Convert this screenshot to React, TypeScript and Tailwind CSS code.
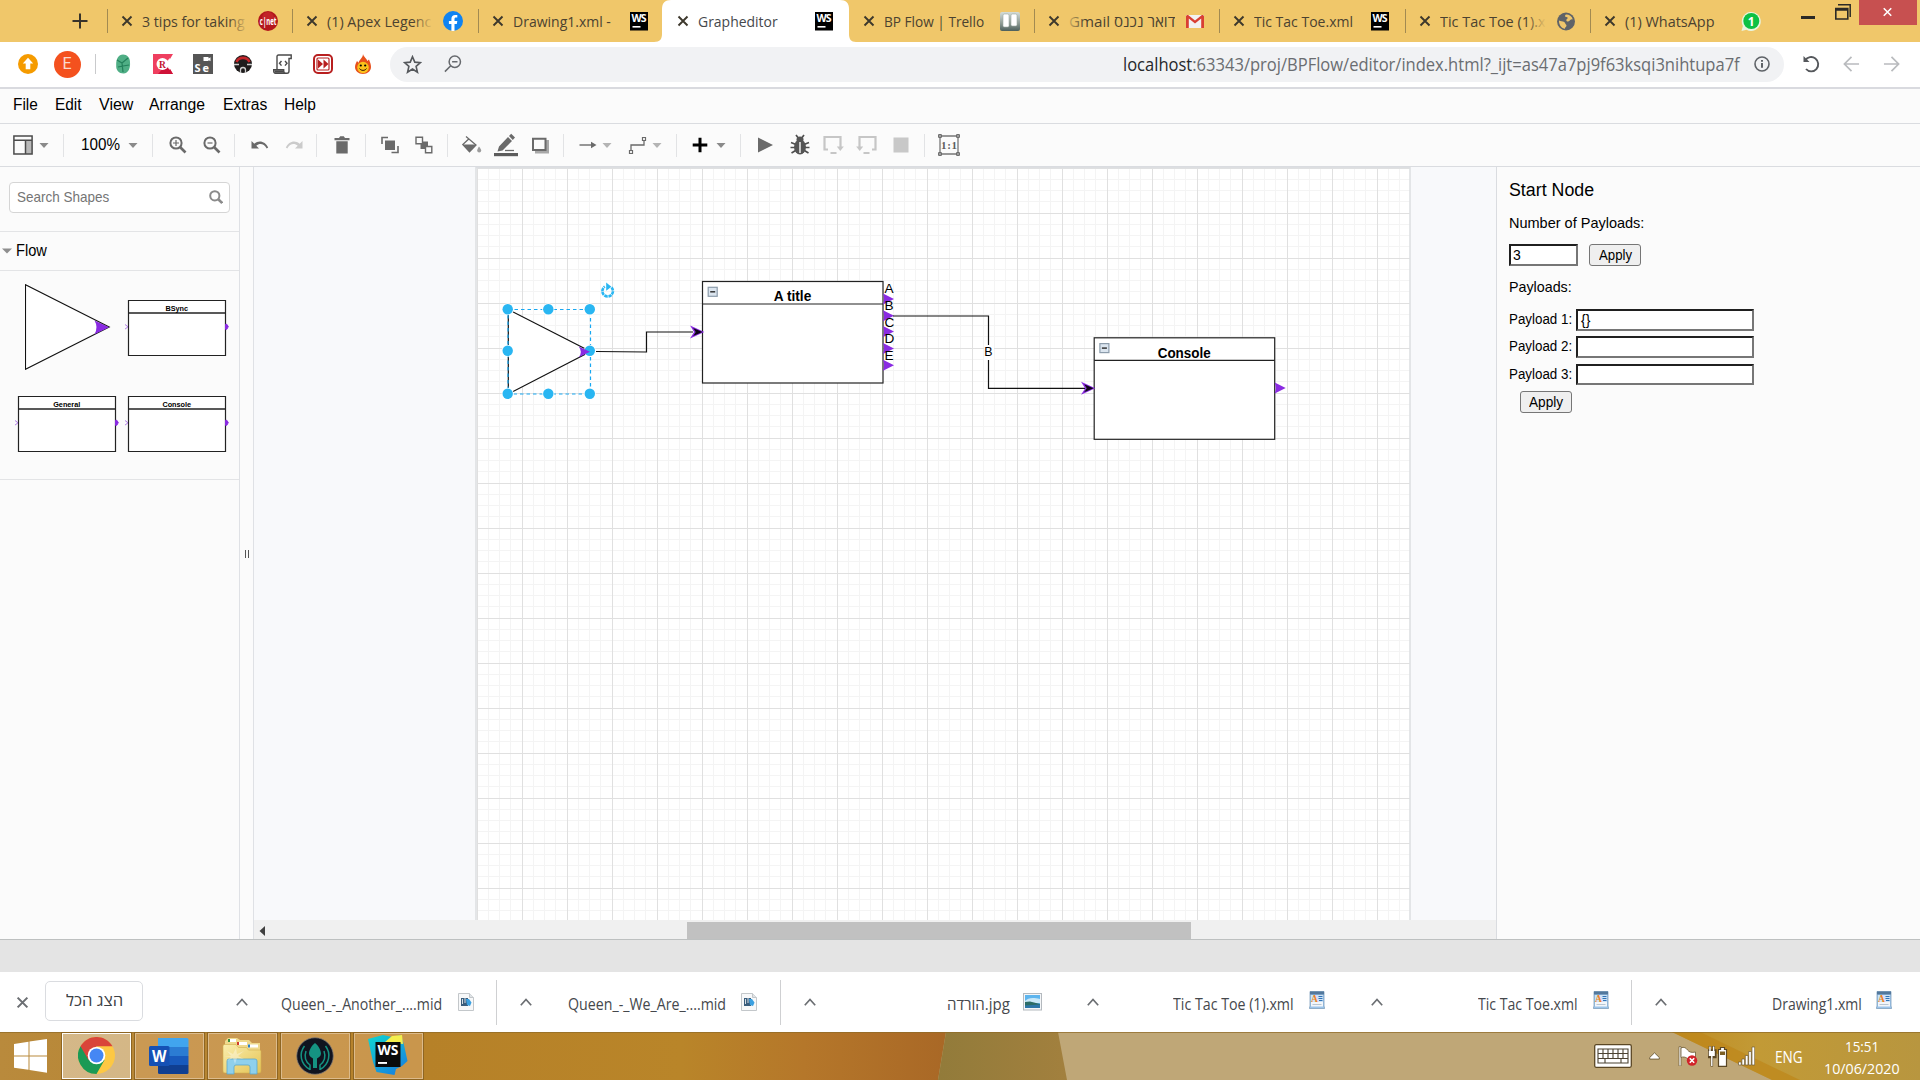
import React, { useLayoutEffect, useRef, useState } from "react";

const UI = "font-['Open_Sans','Noto_Sans','DejaVu_Sans',sans-serif]";
const ARIAL = "font-['Liberation_Sans',Arial,sans-serif]";

/* One line of text squeezed or stretched to a known width. */
function Fit({ w, className = "", rtl = false, children }: { w: number; className?: string; rtl?: boolean; children: React.ReactNode }) {
  const ref = useRef<HTMLSpanElement>(null);
  const [scale, setScale] = useState(1);
  useLayoutEffect(() => {
    const natural = ref.current?.offsetWidth ?? 0;
    if (natural > 0) setScale(w / natural);
  }, [w]);
  return (
    <span className={"block shrink-0 text-left " + className} style={{ width: w }}>
      <span ref={ref} dir={rtl ? "rtl" : "ltr"} className="inline-block origin-left whitespace-nowrap" style={{ transform: `scaleX(${scale})` }}>
        {children}
      </span>
    </span>
  );
}

/* ---------- browser tabs ---------- */

function WsIcon() {
  return (
    <svg viewBox="0 0 20 20" className="h-5 w-5">
      <rect x="1" y="1" width="18" height="18.5" fill="#000" />
      <text x="10" y="11" fontSize="10.5" fontWeight="700" fill="#fff" textAnchor="middle" textLength="15" fontFamily="Open Sans">WS</text>
      <rect x="3.5" y="15" width="8" height="1.6" fill="#fff" />
    </svg>
  );
}

const favicons: Record<string, React.ReactNode> = {
  cnet: (
    <svg viewBox="0 0 20 20" className="h-5 w-5">
      <circle cx="10" cy="10" r="10" fill="#b3161b" />
      <circle cx="10" cy="7" r="6" fill="#c92a2e" opacity=".7" />
      <text x="1.800" y="13.500" fontSize="10" fontWeight="700" fill="#fff" textLength="16.500" lengthAdjust="spacingAndGlyphs" fontFamily="Open Sans">c|net</text>
    </svg>
  ),
  fb: (
    <svg viewBox="0 0 20 20" className="h-5 w-5">
      <circle cx="10" cy="10" r="10" fill="#0f83f2" />
      <path d="M8.400 20v-7H5.900v-2.900h2.500V7.900c0-2.600 1.500-4 3.800-4 1.100 0 2.100.2 2.100.2v2.500h-1.300c-1.200 0-1.500.7-1.500 1.500v2H14.300l-.5 2.900h-2.300v7z" fill="#fff" />
    </svg>
  ),
  ws: <WsIcon />,
  trello: (
    <svg viewBox="0 0 20 20" className="h-5 w-5">
      <defs>
        <linearGradient id="tr" x1="0" y1="0" x2="0" y2="1"><stop offset="0" stopColor="#d5ddd8" /><stop offset=".6" stopColor="#8d9a93" /><stop offset="1" stopColor="#4c5f5c" /></linearGradient>
      </defs>
      <rect y="1" width="20" height="19" rx="2" fill="url(#tr)" />
      <rect x="3" y="3" width="6" height="13" rx="1.500" fill="#fff" stroke="#9caaa2" strokeWidth=".6" />
      <rect x="11" y="3" width="6" height="12" rx="1.500" fill="#fff" stroke="#9caaa2" strokeWidth=".6" />
    </svg>
  ),
  gmail: (
    <svg viewBox="0 0 20 20" className="h-5 w-5">
      <rect x="1" y="4" width="18" height="13" fill="#f2f2f2" />
      <path d="M1 5.500v11.500h2.800V7.500L10 12.500l6.200-5V17H19V5.500c0-1.500-1.500-2-2.500-1.200L10 9.500 3.500 4.300C2.500 3.500 1 4 1 5.500z" fill="#d93f33" />
    </svg>
  ),
  globe: (
    <svg viewBox="0 0 20 20" className="h-5 w-5">
      <circle cx="10" cy="10.500" r="9" fill="#5f6368" />
      <path d="M3 9.500c1.500.8 3.800.5 5.200 1.500 1.300 1 .8 1.800 1.800 2.500s.3 2.300-.5 2.700-.2 1.600-1 1.600C5 16.800 2.800 13.500 3 9.500z" fill="#efc66c" />
      <path d="M10.500 3.500c2.500 0 5.500 1.800 6.300 5-1.500-.8-2.500.2-3.300 1.300-1 1.200-3 .8-3.200-.5s1.600-1.500 1.400-2.500-2.700-.3-2.700-1.500.6-1.800 1.500-1.800z" fill="#efc66c" />
    </svg>
  ),
  wa: (
    <svg viewBox="0 0 20 20" className="h-5 w-5">
      <path d="M.5 20l1.400-5A9.500 9.500 0 1 1 5.500 18.700z" fill="#e9f5df" />
      <circle cx="10.300" cy="10" r="8" fill="#0dc143" />
      <text x="10.300" y="14.500" fontSize="12" fontWeight="700" fill="#fff" textAnchor="middle" fontFamily="Open Sans">1</text>
    </svg>
  ),
};

function Cross({ className }: { className: string }) {
  return (
    <svg viewBox="0 0 12 12" className={className}>
      <path d="M1.500 1.500l9 9M10.500 1.500l-9 9" stroke="currentColor" strokeWidth="1.900" />
    </svg>
  );
}

type Tab = { title: string; w: number; icon: string; fade?: boolean; active?: boolean; sep?: boolean; rtl?: boolean };
const tabs: Tab[] = [
  { title: "3 tips for taking", w: 103, icon: "cnet", fade: true, sep: true },
  { title: "(1) Apex Legenc", w: 104, icon: "fb", fade: true, sep: true },
  { title: "Drawing1.xml -", w: 98, icon: "ws", sep: true },
  { title: "Grapheditor", w: 80, icon: "ws", active: true },
  { title: "BP Flow | Trello", w: 100, icon: "trello" },
  { title: "דואר נכנס Gmail", w: 106, icon: "gmail", sep: true, rtl: true },
  { title: "Tic Tac Toe.xml", w: 99, icon: "ws", sep: true },
  { title: "Tic Tac Toe (1).x", w: 106, icon: "globe", fade: true, sep: true },
  { title: "(1) WhatsApp", w: 89.5, icon: "wa", sep: true },
];

function TabStrip() {
  return (
    <div className={"relative flex h-[42px] items-start bg-[#f0c76a] " + UI}>
      <div className="flex h-[42px] w-[107px] items-center justify-end pr-[19px]">
        <svg viewBox="0 0 16 16" className="h-4 w-4"><path d="M8 .5v15M.5 8h15" stroke="#38332a" strokeWidth="2" /></svg>
      </div>
      {tabs.map((t, i) => (
        <div key={i} className="relative flex h-[42px] w-[185.400px] items-center">
          {t.active && (
            <svg viewBox="0 0 202 42" className="absolute -left-[9px] top-0 h-[42px] w-[202px]">
              <path d="M0 42c6 0 8-3 8-8V9c0-6 3-9 9-9h169c6 0 9 3 9 9v25c0 5 2 8 7 8z" fill="#fff" />
            </svg>
          )}
          <div className={"h-6 w-px shrink-0 " + (t.sep ? "bg-[#a28a51]" : "bg-transparent")} />
          <Cross className="relative ml-[13px] h-3 w-3 shrink-0 text-[#3d382c]" />
          <div className={"relative ml-[9px] w-[106px] overflow-hidden text-[15px] leading-[22px] " + (t.active ? "text-[#45484c]" : "text-[#4b4230]")}>
            <Fit w={t.w} rtl={t.rtl}>{t.title}</Fit>
            {t.fade && <div className="absolute right-0 top-0 h-full w-5 bg-gradient-to-r from-[#f0c76a]/0 to-[#f0c76a]" />}
            {t.rtl && <div className="absolute left-0 top-0 h-full w-4 bg-gradient-to-l from-[#f0c76a]/0 to-[#f0c76a]/80" />}
          </div>
          <div className="relative ml-[10px] shrink-0">{favicons[t.icon]}</div>
        </div>
      ))}
      <div className="flex flex-1 items-start">
        <div className="ml-[25px] mt-4 h-[2.500px] w-[14px] shrink-0 bg-[#2b2a26]" />
        <svg viewBox="0 0 16 16" className="ml-5 mt-[3.500px] h-4 w-4 shrink-0"><path d="M3 .8h12.200V13" fill="none" stroke="#2b2a26" strokeWidth="1.500" /><path d="M.8 4.500h12V15H.8zM.8 6h12" fill="none" stroke="#2b2a26" strokeWidth="1.600" /></svg>
      </div>
      <div className="mr-[3px] flex h-[25px] w-[58px] shrink-0 items-center justify-center bg-[#c75050] pr-[2px] pb-[2px]"><Cross className="h-[10px] w-[11px] text-white" /></div>
    </div>
  );
}

/* ---------- address bar ---------- */

function AddressBar() {
  return (
    <div className={"flex h-[47px] items-center border-b-2 border-[#d9dadf] bg-white pb-px " + UI}>
      <svg viewBox="0 0 20 20" className="ml-[17.500px] h-5 w-5 shrink-0"><circle cx="10" cy="10" r="10" fill="#f59b00" /><path d="M10 3.800l5.200 5.700h-2.900v5.700H7.700V9.500H4.800z" fill="#fff" /></svg>
      <div className="ml-4 flex h-[27px] w-[27px] shrink-0 items-center justify-center rounded-full bg-[#f4511e] text-[16px] text-[#fbd9cd] font-['Roboto']">E</div>
      <div className="ml-[14px] h-5 w-px shrink-0 bg-[#c9cacc]" />
      <svg viewBox="0 0 16 20" className="ml-[19.500px] h-5 w-4 shrink-0">
        <path d="M8 .5c4 0 7.200 3 7 8 .5 5-1.500 11-6.500 11C4 19.500.8 16.500 1.200 11 1 5 3.500.5 8 .5z" fill="#4fae85" /><path d="M2 6l5 3 6-5M7 9l1 9M8 12l6-1M3 13l5-1" stroke="#23805b" strokeWidth="1.200" fill="none" />
      </svg>
      <svg viewBox="0 0 20 20" className="ml-[22px] h-5 w-5 shrink-0">
        <path d="M0 0h20l-6 10 6 10H0z" fill="#ef3f5f" /><path d="M5 20h15l-6-10z" fill="#cf1238" />
        <circle cx="9.500" cy="10" r="6" fill="#fff" />
        <text x="9.500" y="13.500" fontSize="9.500" fontWeight="700" textAnchor="middle" fill="#c4122f" fontFamily="Liberation Serif">R</text>
        <path d="M14 7l3-3v12l-3-3z" fill="#fff" opacity=".9" />
      </svg>
      <svg viewBox="0 0 20 20" className="ml-[20px] h-5 w-5 shrink-0">
        <rect width="20" height="20" fill="#565656" /><path d="M10.500 3h5v1.500l2-1.200v4l-2-1.200V7h-5z" fill="#fff" />
        <text x="1.500" y="17.500" fontSize="11" fontWeight="700" fill="#fff" textLength="14.500" fontFamily="Open Sans">Se</text>
      </svg>
      <svg viewBox="0 0 20 20" className="ml-[20px] h-5 w-5 shrink-0">
        <circle cx="10" cy="10" r="9" fill="#1e1c1c" /><path d="M3.500 8a7 6.500 0 0 1 13 0" fill="none" stroke="#c4252a" strokeWidth="2.600" />
        <path d="M1 10.500h5M14 10.500h5M10 13.500a2.500 2.500 0 0 0-2.500 2.500v3M10 13.500a2.500 2.500 0 0 1 2.500 2.500v3" stroke="#cfcfcf" strokeWidth="1.300" fill="none" />
      </svg>
      <svg viewBox="0 0 20 20" className="ml-[20px] h-5 w-5 shrink-0" fill="none" stroke="#4a4a4a" strokeWidth="1.400">
        <path d="M4 15V2.500C4 1.500 4.500 1 5.500 1h12.700v3.500H16V17c0 1.500-.8 2.200-2 2.200H2.500c-1.300 0-1.800-1-1.800-2.200v-1.200h10V17c0 1.500 1 2.200 2.200 2.200" />
        <path d="M8.500 7L6.500 9.300l2 2.300M12 7l2 2.300-2 2.300" /><path d="M1.500 17.500h9" strokeWidth="2.500" />
      </svg>
      <svg viewBox="0 0 20 20" className="ml-[20px] h-5 w-5 shrink-0">
        <rect x="1" y="1" width="18" height="18" rx="4" fill="#fff" stroke="#b81f1f" strokeWidth="2" /><rect x="4" y="4" width="12" height="12" rx="1" fill="#fff" stroke="#b81f1f" strokeWidth="1.200" />
        <path d="M5 5.500l5 4.500-5 4.500zM10.500 5.500l5 4.500-5 4.500z" fill="#b81f1f" />
      </svg>
      <svg viewBox="0 0 16 20" className="ml-[22px] h-5 w-4 shrink-0">
        <path d="M8 0c.5 3 4 4.500 4.200 7l1.800-1.500c1 2.500 2 5 2 7.500 0 4-3.500 7-8 7s-8-3-8-7c0-2.500 1.200-4.500 2-6l1.600 1.700C4.500 5.500 8 3.500 8 0z" fill="#e8501c" />
        <ellipse cx="8" cy="13.500" rx="5.800" ry="5.800" fill="#fbc21b" /><circle cx="5.800" cy="11.500" r="1.100" /><circle cx="10.200" cy="11.500" r="1.100" /><path d="M4.500 14.500c1.500 2.500 5.500 2.500 7 0" stroke="#3b1a00" fill="none" strokeWidth="1" />
      </svg>
      <div className="ml-[19px] flex h-[35px] w-[1394px] shrink-0 items-center rounded-full bg-[#f1f2f4]">
        <svg viewBox="0 0 20 20" className="ml-[13px] h-[19px] w-[19px]" fill="none" stroke="#55585c" strokeWidth="1.700"><path d="M10 1.800l2.400 5.700 6 .5-4.600 4 1.400 6.100L10 14.800 4.800 18.100l1.400-6.100L1.600 8l6-.5z" /></svg>
        <svg viewBox="0 0 20 20" className="ml-[22px] h-[18px] w-[18px]" fill="none" stroke="#66696d" strokeWidth="1.700"><circle cx="12" cy="7.500" r="6.300" /><path d="M7.500 12L1 18.500M9 7.500h6" /></svg>
        <div className="flex flex-1 justify-end text-[17.500px] leading-6">
          <Fit w={617} className="text-[#6a6d71]"><span className="text-[#26282b]">localhost</span>:63343/proj/BPFlow/editor/index.html?_ijt=as47a7pj9f63ksqi3nihtupa7f</Fit>
        </div>
        <svg viewBox="0 0 16 16" className="ml-[14px] mr-[14px] h-4 w-4" fill="none" stroke="#5f6368" strokeWidth="1.600"><circle cx="8" cy="8" r="7" /><path d="M8 7v4.800M8 4v1.700" strokeWidth="2" /></svg>
      </div>
      <svg viewBox="0 0 18 18" className="ml-[18px] h-[18px] w-[18px] shrink-0" fill="none" stroke="#55585c" strokeWidth="1.900"><path d="M3.200 5.500A7 7.200 0 1 1 4 14" /><path d="M1.500 1v6h6z" fill="#55585c" stroke="none" /></svg>
      <svg viewBox="0 0 18 18" className="ml-[23px] h-[18px] w-[17px] shrink-0" fill="none" stroke="#b9bbbe" strokeWidth="1.800"><path d="M17 9H1.500M9 1.500L1.500 9 9 16.500" /></svg>
      <svg viewBox="0 0 18 18" className="ml-[23px] h-[18px] w-[17px] shrink-0" fill="none" stroke="#b9bbbe" strokeWidth="1.800"><path d="M1 9h15.500M9 1.500L16.500 9 9 16.500" /></svg>
    </div>
  );
}

/* ---------- editor menu and toolbar ---------- */

function MenuBar() {
  return (
    <div className={"flex h-[35px] items-center border-b border-[#dadce0] bg-[#fbfbfb] pb-[2px] text-[16px] leading-5 text-black " + ARIAL}>
      <Fit w={25} className="ml-[13px]">File</Fit>
      <Fit w={27} className="ml-[17px]">Edit</Fit>
      <Fit w={34} className="ml-[17px]">View</Fit>
      <Fit w={56} className="ml-[16px]">Arrange</Fit>
      <Fit w={44} className="ml-[18px]">Extras</Fit>
      <Fit w={32} className="ml-[17px]">Help</Fit>
    </div>
  );
}

function Caret({ className, light = false }: { className: string; light?: boolean }) {
  return (
    <svg viewBox="0 0 10 10" className={"h-[10px] w-[10px] shrink-0 " + className}><path d="M.5 3h9L5 8z" fill={light ? "#b4b4b4" : "#8a8a8a"} /></svg>
  );
}
function Sep({ className }: { className: string }) {
  return <div className={"h-[23px] w-px shrink-0 bg-[#e2e3e5] " + className} />;
}
function Ico({ className, children }: { className: string; children: React.ReactNode }) {
  return <svg viewBox="0 0 20 20" className={"h-5 w-5 shrink-0 overflow-visible " + className}>{children}</svg>;
}

function Toolbar() {
  const g = "#6a6a6a";
  return (
    <div className={"flex h-[43px] items-center border-b border-[#dadce0] bg-[#fbfbfb] " + ARIAL}>
      <Ico className="ml-[13px]"><path d="M13 5.500h6V19h-6z" fill="#b9b9b9" /><path d="M.9.9h18.200v18.200H.9zM1 5.200h18M12.500 5.500V19" fill="none" stroke="#4b4b4b" strokeWidth="1.500" /></Ico>
      <Caret className="ml-[6px]" />
      <Sep className="ml-[14px]" />
      <Fit w={39} className="ml-[17px] mr-px text-[16px] leading-5 text-black">100%</Fit>
      <Caret className="ml-[7px]" />
      <Sep className="ml-[14px]" />
      <Ico className="ml-[15px]"><circle cx="8" cy="8" r="5.600" fill="none" stroke={g} strokeWidth="2" /><path d="M12 12l5.500 5.500" stroke={g} strokeWidth="2.600" /><path d="M5 8h6M8 5v6" stroke={g} strokeWidth="1.200" /></Ico>
      <Ico className="ml-[14px]"><circle cx="8" cy="8" r="5.600" fill="none" stroke={g} strokeWidth="2" /><path d="M12 12l5.500 5.500" stroke={g} strokeWidth="2.600" /><path d="M5.500 8h5" stroke={g} strokeWidth="1.200" /></Ico>
      <Sep className="ml-[12px]" />
      <Ico className="ml-[15px]"><path d="M1.500 6v7.500h7.500L6.300 10.800C9.500 8 14 8.500 16.700 13.500l1.500-.9C15.500 6.500 9 4.500 4.300 8.800z" fill={g} /></Ico>
      <Ico className="ml-[14px]"><path d="M18.500 6v7.500H11l2.700-2.700C10.500 8 6 8.500 3.300 13.500l-1.500-.9C4.500 6.500 11 4.500 15.700 8.800z" fill="#cbcbcb" /></Ico>
      <Sep className="ml-[12px]" />
      <Ico className="ml-[15px]"><path d="M2.500 3h4.500l1.200-1.700h3.600L13 3h4.500v2.200h-15zM4.300 6.200h11.400v12.300H4.300z" fill={g} /></Ico>
      <Sep className="ml-[13px]" />
      <Ico className="ml-[14px]"><path d="M8 2.500H2V9M11.500 17.500H18V11" fill="none" stroke={g} strokeWidth="1.600" /><path d="M5 5.500h10v9.500H5z" fill={g} /></Ico>
      <Ico className="ml-[14px]"><path d="M6.500 6.500H14V14H6.500z" fill={g} /><path d="M2 2.200h6.500v6.500H2zM11.500 11.500h6.300v6.300h-6.300z" fill="#fbfbfb" stroke={g} strokeWidth="1.400" /></Ico>
      <Sep className="ml-[13px]" />
      <Ico className="ml-[14px]"><path d="M4 1.500l10 8.500-6.500 6.800L.8 9.500 7 3.800" fill="none" stroke={g} strokeWidth="1.300" /><path d="M1 9.500h13L7.500 16.500z" fill={g} /><path d="M17 11.500c1.500 2 2.200 3 2.200 4a2 2 0 0 1-4 0c0-1 .5-2 1.800-4z" fill="#9c9c9c" /></Ico>
      <svg viewBox="0 0 24 24" className="ml-[12px] h-6 w-6 shrink-0"><path d="M5 13.500L14 4l4 4-9.500 9.500-5 1zM15 3l2.200-2.200 3.800 3.800L18.800 7z" fill={g} /><path d="M11 17.500h9" stroke={g} strokeWidth="1.300" /><path d="M0 20h24v3.200H0z" fill="#5c5c5c" /></svg>
      <Ico className="ml-[12px]"><path d="M5 5h14v13.500H5z" fill="#a8a8a8" /><path d="M3 3.800h12.500V15H3z" fill="#fbfbfb" stroke={g} strokeWidth="2" /></Ico>
      <Sep className="ml-[13px]" />
      <Ico className="ml-[14px]"><path d="M1.500 10h13" stroke={g} strokeWidth="1.400" /><path d="M13 6.800l5.500 3.200-5.500 3.200z" fill={g} /></Ico>
      <Caret className="ml-[4px]" light />
      <Ico className="ml-[16px]"><path d="M3 15.500V10h13V6" fill="none" stroke={g} strokeWidth="1.300" /><path d="M1.500 15.500h3v3h-3zM14.500 2.500h3v3h-3z" fill="none" stroke={g} strokeWidth="1.200" /></Ico>
      <Caret className="ml-[4px]" light />
      <Sep className="ml-[14px]" />
      <Ico className="ml-[13px]"><path d="M10 2.700v14.600M2.700 10h14.600" stroke="#000" strokeWidth="3" /></Ico>
      <Caret className="ml-[6px]" />
      <Sep className="ml-[14px]" />
      <Ico className="ml-[14px]"><path d="M3 2.500L18 10 3 17.500z" fill={g} /></Ico>
      <Ico className="ml-[15px]"><path d="M6 0l3 4M14 0l-3 4M1 7.500l5 2M19 7.500l-5 2M.5 12.500h19M1.500 18l5-3M18.500 18l-5-3" stroke="#4f4f4f" strokeWidth="1.700" /><ellipse cx="10" cy="12" rx="6" ry="7.500" fill="#555" /><ellipse cx="10" cy="4.500" rx="3.500" ry="3" fill="#555" /><path d="M10 7v11" stroke="#fbfbfb" strokeWidth="1.400" /></Ico>
      <Ico className="ml-[13px]"><path d="M5 14.500H1.500V2H17.500v10M7.500 18h6" fill="none" stroke="#c6c6c6" strokeWidth="2.200" /><path d="M13.800 11.500h7L17.300 16z" fill="#c6c6c6" /></Ico>
      <Ico className="ml-[14px]"><path d="M15 14.500h3.500V2H2.500v10M6.500 18h6" fill="none" stroke="#c6c6c6" strokeWidth="2.200" /><path d="M-.8 11.500h7L2.700 16z" fill="#c6c6c6" /></Ico>
      <Ico className="ml-[13.500px]"><rect x="2.500" y="2.500" width="15" height="15" fill="#c8c8c8" /></Ico>
      <Sep className="ml-[13.500px]" />
      <svg viewBox="0 0 22 22" className="ml-[13px] h-[22px] w-[22px] shrink-0 overflow-visible">
        <path d="M2 2h18v18H2z" fill="none" stroke="#777" strokeWidth="1.300" />
        <path d="M.6.6h2.800v2.800H.6zM18.600.6h2.800v2.800h-2.800zM.6 18.600h2.800v2.800H.6zM18.600 18.600h2.800v2.800h-2.800z" fill="#aaa" stroke="#666" strokeWidth="1" />
        <text x="11" y="14.500" fontSize="11" fontWeight="700" textAnchor="middle" textLength="16" fill="#5c5c5c" fontFamily="Liberation Serif">1:1</text>
      </svg>
    </div>
  );
}

/* ---------- shapes sidebar ---------- */

function NodeThumb({ label, w, className }: { label: string; w: number; className: string }) {
  return (
    <svg viewBox="0 0 104 56" className={"h-14 w-[104px] shrink-0 " + className}>
      <path d="M3.500.5h97v55H3.500z" fill="#fff" stroke="#222" strokeWidth="1.200" />
      <path d="M3.500 13h97" stroke="#222" strokeWidth="1.300" />
      <text x="51.700" y="10.800" fontSize="7.300" fontWeight="700" textAnchor="middle" textLength={w} fontFamily="Liberation Sans">{label}</text>
      <path d="M0 24.500l3 2.300-3 2.300" fill="none" stroke="#b07be6" strokeWidth="1" />
      <path d="M100.500 24.300h1.300l1.500 2.300-1.500 2.700h-1.300z" fill="#8a2be2" stroke="#8a2be2" />
    </svg>
  );
}

function Sidebar() {
  return (
    <div className={"flex w-[240px] shrink-0 flex-col border-r border-[#dfe1e5] bg-[#fbfbfb] " + ARIAL}>
      <div className="flex h-[65px] items-start border-b border-[#e3e4e6] pl-[9px] pt-[15px]">
        <div className="flex h-[31px] w-[221px] items-center rounded-[4px] border border-[#d5d5d5] bg-white pb-[2px] pl-[7px] pr-[6px]">
          <Fit w={92} className="text-[14.500px] leading-5 text-[#757575]">Search Shapes</Fit>
          <svg viewBox="0 0 14 14" className="ml-auto h-[14px] w-[14px]" fill="none" stroke="#8b8b8b"><circle cx="5.800" cy="5.800" r="4.600" strokeWidth="2" /><path d="M9 9l4.200 4" strokeWidth="2.600" /></svg>
        </div>
      </div>
      <div className="flex h-[39px] items-center border-b border-[#e3e4e6] pl-[2px]">
        <svg viewBox="0 0 10 6" className="h-[6px] w-[10px]"><path d="M0 .5h10L5 5.500z" fill="#8e8e8e" /></svg>
        <Fit w={31} className="ml-[4px] text-[16px] leading-5 text-black">Flow</Fit>
      </div>
      <div className="h-[209px] border-b border-[#e3e4e6]">
        <div className="flex h-[125px] items-start">
          <svg viewBox="0 0 86 86" className="ml-[25px] mt-[13px] h-[86px] w-[86px] shrink-0">
            <path d="M.5.700v84.600L84.200 43z" fill="#fff" stroke="#111" strokeWidth="1.100" />
            <path d="M69.500 36.500L84.200 43.200 69.500 50.300q4-7 0-13.800z" fill="#8a2be2" />
          </svg>
          <NodeThumb label="BSync" w={22.5} className="ml-[14px] mt-[29px]" />
        </div>
        <div className="flex">
          <NodeThumb label="General" w={27} className="ml-[15px]" />
          <NodeThumb label="Console" w={28.500} className="ml-[6px]" />
        </div>
      </div>
    </div>
  );
}

/* ---------- diagram canvas ---------- */

const minorX = Array.from({ length: 83 }, (_, i) => ({ p: 477 + i * 11.25, major: i % 4 === 0 }));
const minorY = Array.from({ length: 67 }, (_, i) => ({ p: 168 + i * 11.25, major: i % 4 === 0 }));
const handles = [[507.700, 309.300], [548.300, 309.300], [589.800, 309.300], [507.700, 350.800], [589.800, 350.800], [507.700, 393.700], [548.300, 393.700], [589.800, 393.700]];
const ports = [
  { t: "A", y: 299, b: 293 },
  { t: "B", y: 315.700, b: 310 },
  { t: "C", y: 331.500, b: 326.700 },
  { t: "D", y: 348.500, b: 342.700 },
  { t: "E", y: 365.300, b: 360 },
];

function Port({ x, y }: { x: number; y: number }) {
  return <path d={`M${x} ${y - 5.500}L${x + 11} ${y}L${x} ${y + 5.500}Q${x + 2} ${y} ${x} ${y - 5.500}z`} fill="#8a2be2" />;
}
function InPort({ x, y }: { x: number; y: number }) {
  return (
    <>
      <path d={`M${x} ${y - 4.800}L${x + 10.500} ${y}L${x} ${y + 4.800}L${x + 3} ${y}z`} fill="none" stroke="#8a2be2" strokeWidth="1.500" />
      <path d={`M${x + 1.200} ${y - 4}L${x + 10.500} ${y}L${x + 1.200} ${y + 4}L${x + 3.600} ${y}z`} fill="#0d0318" />
    </>
  );
}
function Collapse({ x, y }: { x: number; y: number }) {
  return (
    <>
      <rect x={x} y={y} width="9" height="9" fill="#dbe5ef" stroke="#8c9cab" strokeWidth="1.200" />
      <path d={`M${x + 2} ${y + 4.500}h5`} stroke="#333" strokeWidth="1.500" />
    </>
  );
}
function DiagramNode({ x, y, title, tw, tb }: { x: number; y: number; title: string; tw: number; tb: number }) {
  return (
    <>
      <rect x={x} y={y} width="180.500" height="101.500" fill="#fff" stroke="#222" strokeWidth="1.200" />
      <path d={`M${x} ${y + 22.500}h180.500`} stroke="#222" strokeWidth="1.200" />
      <text x={x + 90} y={tb} fontSize="13.800" fontWeight="700" textAnchor="middle" textLength={tw} lengthAdjust="spacingAndGlyphs">{title}</text>
      <Collapse x={x + 5.700} y={y + 5.800} />
    </>
  );
}

function Canvas() {
  return (
    <svg viewBox="254 167 1242 753" className="block h-[753px] w-[1242px]" fontFamily="Liberation Sans">
      <rect x="254" y="167" width="1242" height="753" fill="#f8f9fb" />
      <rect x="476" y="167" width="934" height="753" fill="#fff" />
      {[false, true].map((m) => (
        <g key={String(m)} fill={m ? "#e0e0e0" : "#f4f4f4"} shapeRendering="crispEdges">
          {minorX.filter((l) => l.major === m).map((l) => <rect key={l.p} x={Math.floor(l.p)} y="168" width="1" height="752" />)}
          {minorY.filter((l) => l.major === m).map((l) => <rect key={l.p} x="477" y={Math.floor(l.p)} width="933" height="1" />)}
        </g>
      ))}
      <path d="M476 920V167.500H1410V920" fill="none" stroke="#dcdee1" strokeWidth="1.500" />

      <path d="M508.300 309.500v84.500L590.500 351.500z" fill="#fff" stroke="#111" strokeWidth="1.200" />
      <path d="M596 351.500L646.500 352V332H693" fill="none" stroke="#111" strokeWidth="1.200" />
      <DiagramNode x={702.500} y={281.500} title="A title" tw={37.500} tb={300.500} />
      <InPort x={692} y={332} />
      {ports.map((p) => (
        <g key={p.t}>
          <text x="884.500" y={p.b} fontSize="13.600">{p.t}</text>
          <Port x={883} y={p.y} />
        </g>
      ))}
      <path d="M893 316H988.500V388.300H1085" fill="none" stroke="#111" strokeWidth="1.200" />
      <rect x="984" y="345" width="10" height="15" fill="#fff" />
      <text x="988.500" y="355.800" fontSize="12.400" textAnchor="middle">B</text>
      <DiagramNode x={1094.200} y={337.800} title="Console" tw={53} tb={357.500} />
      <InPort x={1083} y={388.300} />
      <Port x={1274.700} y={388} />

      <path d="M508 309.500H590.500V394H508z" fill="none" stroke="#18a8f2" strokeWidth="1.200" strokeDasharray="3.500 3" />
      {handles.map(([x, y]) => (
        <g key={`${x}-${y}`}>
          <circle cx={x} cy={y} r="6" fill="#fff" />
          <circle cx={x} cy={y} r="5.200" fill="#29b6f2" />
        </g>
      ))}
      <path d="M578.700 346.500L590 351.700 578.700 357.300Q583 352 578.700 346.500z" fill="#8a2be2" />
      <path d="M611.500 287.500A5.300 5.300 0 1 1 604.800 286.700" fill="none" stroke="#29b6f2" strokeWidth="2.600" strokeDasharray="3.300 .7" />
      <path d="M606.200 282.500l5.200 4.200-5.200 4z" fill="#29b6f2" />
    </svg>
  );
}

/* ---------- format panel ---------- */

const INSET = "border-2 border-t-[#1f1f1f] border-l-[#1f1f1f] border-r-[#767676] border-b-[#767676] bg-white";
const BTN = "flex h-[22px] w-[52px] items-center justify-center rounded-[3px] border border-[#767676] bg-[#efefef] text-[14px] leading-4 text-black";

function FormatPanel() {
  return (
    <div className={"flex flex-1 flex-col border-l border-[#dadce0] bg-[#fbfbfb] pl-[12px] text-[14.500px] leading-5 text-black " + ARIAL}>
      <Fit w={85} className="mt-[13px] text-[17.600px]">Start Node</Fit>
      <Fit w={135} className="mt-[13px]">Number of Payloads:</Fit>
      <div className="mt-[11px] flex h-[22px]">
        <div className={"w-[69px] pl-[2px] text-[14px] leading-[19px] " + INSET}>3</div>
        <div className={"ml-[11px] " + BTN}><Fit w={33}>Apply</Fit></div>
      </div>
      <Fit w={63} className="mt-[11px]">Payloads:</Fit>
      <div className="mt-[12px] flex h-[22px]">
        <Fit w={63} className="text-[14px]">Payload 1:</Fit>
        <div className={"ml-[4px] w-[178px] pl-[3px] text-[14px] leading-[18px] " + INSET}><Fit w={9}>{"{}"}</Fit></div>
      </div>
      <div className="mt-[5px] flex h-[22px]">
        <Fit w={63} className="text-[14px]">Payload 2:</Fit>
        <div className={"ml-[4px] w-[178px] " + INSET} />
      </div>
      <div className="mt-[6px] flex h-[21px]">
        <Fit w={63} className="text-[14px]">Payload 3:</Fit>
        <div className={"ml-[4px] w-[178px] " + INSET} />
      </div>
      <div className={"ml-[11px] mt-[6px] " + BTN}><Fit w={34}>Apply</Fit></div>
    </div>
  );
}

/* ---------- downloads shelf ---------- */

function MidIcon() {
  return (
    <svg viewBox="0 0 16 18" className="h-[18px] w-4"><path d="M.5.5h11l4 4v13H.5z" fill="#f7f8f9" stroke="#c3c7ca" /><path d="M11.500.5v4h4" fill="#dfe3e6" stroke="#c3c7ca" /><rect x="3" y="5" width="7" height="8" fill="#3a5d7c" /><path d="M8 6l1 6 3 1 1.500-3.500L11 6z" fill="#3ba0e0" /><path d="M4.500 6v5M7 5v5" stroke="#fff" strokeWidth=".8" /></svg>
  );
}
function JpgIcon() {
  return (
    <svg viewBox="0 0 19 18" className="-ml-[2px] h-[18px] w-[19px]"><rect x=".5" y=".5" width="18" height="16.500" fill="#f4f6f8" stroke="#b4b9be" /><rect x="2" y="2" width="15" height="13" fill="#5eb5ee" /><path d="M2 8c3-3 7-4 15-2v4H2z" fill="#c9e8f8" /><path d="M2 9l5-.5L17 11v4H2z" fill="#2b6c66" /><path d="M2 12.500l15-1V15H2z" fill="#2c76a8" /></svg>
  );
}
function XmlIcon() {
  return (
    <svg viewBox="0 0 16 18" className="-mt-[5px] h-[18px] w-4"><path d="M1 .5h14v14.500l.7 2.500H.3L1 15z" fill="#9cc4ea" stroke="#7f9fbd" strokeWidth=".8" /><path d="M1 .5h14v3H1z" fill="#53789c" /><path d="M2 11h12v4.500H2z" fill="#f2f6fa" /><path d="M2 4h12v7H2z" fill="#cfe3f6" /><path d="M9.500 5.500h4M9.500 7.500h4M10 9.500h3.500" stroke="#2f73b8" /><text x="2" y="11" fontSize="9.500" fontWeight="700" fill="#f08223" fontFamily="Liberation Serif">A</text><path d="M3.500 13.500h9" stroke="#b9c6d2" /></svg>
  );
}

const downloads = [
  { name: "Queen_-_Another_....mid", w: 161.500, icon: <MidIcon />, sep: true },
  { name: "Queen_-_We_Are_....mid", w: 158.500, icon: <MidIcon />, sep: true },
  { name: "\u202Aהורדה.jpg\u202C", w: 63, icon: <JpgIcon />, sep: false },
  { name: "Tic Tac Toe (1).xml", w: 121, icon: <XmlIcon />, sep: false },
  { name: "Tic Tac Toe.xml", w: 100, icon: <XmlIcon />, sep: true },
  { name: "Drawing1.xml", w: 89.500, icon: <XmlIcon />, sep: false },
];

function DownloadShelf() {
  return (
    <div className={"flex h-[60px] items-center overflow-hidden bg-white " + UI}>
      <Cross className="ml-[16px] h-[13px] w-[13px] shrink-0 text-[#6b6e72]" />
      <div className="-mt-[2px] ml-[16px] flex h-[40px] w-[98px] shrink-0 items-center justify-center rounded-[5px] border border-[#dadce0] pb-[3px] text-[16px] leading-6 text-[#3c4043]">
        <Fit w={57} rtl>הצג הכל</Fit>
      </div>
      <div className="ml-[70px] flex">
        {downloads.map((d, i) => (
          <div key={i} className={"flex h-[45px] w-[283.800px] shrink-0 items-center border-r " + (d.sep ? "border-[#cfd0d2]" : "border-transparent")}>
            <svg viewBox="0 0 12 8" className="ml-[23px] h-2 w-3 shrink-0"><path d="M.8 7.200L6 1.500l5.200 5.700" fill="none" stroke="#6b6e72" strokeWidth="1.700" /></svg>
            <div className="flex w-[194.500px] shrink-0 justify-end pt-[3px] text-[15.500px] leading-6 text-[#45484c]"><Fit w={d.w}>{d.name}</Fit></div>
            <div className="ml-[15px]">{d.icon}</div>
          </div>
        ))}
      </div>
    </div>
  );
}

/* ---------- taskbar ---------- */

function Task({ active = false, children }: { active?: boolean; children: React.ReactNode }) {
  return (
    <div className={"ml-[2px] flex h-[48px] w-[71px] shrink-0 items-center justify-center border border-[#8e6522] pb-px pr-px " + (active ? "bg-white/40 shadow-[inset_0_0_0_1px_rgba(255,255,255,0.95)]" : "bg-[#e0b078]/45 shadow-[inset_0_0_0_1px_rgba(255,255,255,0.35)]")}>
      {children}
    </div>
  );
}

function Taskbar() {
  return (
    <div className={"relative flex h-[48px] items-center overflow-hidden bg-[#bda77a] " + UI}>
      <svg viewBox="0 0 1920 48" preserveAspectRatio="none" className="absolute inset-0 h-[48px] w-[1920px]">
        <defs>
          <linearGradient id="wood" x1="0" x2="1"><stop offset="0" stopColor="#b98a3c" /><stop offset=".45" stopColor="#b68128" /><stop offset=".72" stopColor="#b98529" /><stop offset=".85" stopColor="#b5772a" /><stop offset="1" stopColor="#a96826" /></linearGradient>
          <linearGradient id="olive" x1="0" x2="1"><stop offset="0" stopColor="#927b3a" /><stop offset="1" stopColor="#a2803e" /></linearGradient>
          <linearGradient id="gold" x1="0" x2="1"><stop offset="0" stopColor="#c08c22" /><stop offset=".35" stopColor="#c29a36" /><stop offset="1" stopColor="#b8963f" /></linearGradient>
        </defs>
        <rect width="1920" height="48" fill="#bfa777" />
        <path d="M0 0h946l-8 48H0z" fill="url(#wood)" />
        <path d="M946 0h112l9 48H938z" fill="url(#olive)" />
        <path d="M1672 0h248v48h-148z" fill="url(#gold)" />
        <path d="M1672 0l100 48h28L1700 0z" fill="#bd8619" opacity=".7" />
        <path d="M0 .5h1920" stroke="#8f6b28" strokeWidth="1" opacity=".7" />
      </svg>
      <div className="relative flex w-full items-center">
        <div className="flex w-[59px] shrink-0 items-center">
          <svg viewBox="0 0 33 34" className="ml-[13.500px] h-[34px] w-[33px]" fill="#fff"><path d="M0 5l14.500-2.200V16.500H0zM15.500 2.600L33 0v16.500H15.500zM0 17.500h14.500v13.300L0 28.700zM15.500 17.500H33v16.200L15.500 31z" /></svg>
        </div>
        <Task active>
          <svg viewBox="0 0 37 37" className="h-[37px] w-[37px]">
            <circle cx="18.500" cy="18.500" r="18.500" fill="#fdc843" />
            <path d="M2.500 9.200A18.500 18.500 0 0 0 18.500 37l8-14-8-4.500z" fill="#1b9a55" />
            <path d="M2.500 9.200L10.500 23 18.500 18.500V9.200H34.500A18.500 18.500 0 0 0 2.500 9.200z" fill="#d9453a" />
            <circle cx="18.500" cy="18.500" r="8.800" fill="#fff" /><circle cx="18.500" cy="18.500" r="7" fill="#4587f4" />
          </svg>
        </Task>
        <Task>
          <svg viewBox="0 0 40 36" className="h-9 w-10">
            <path d="M9 0h29q1.500 0 1.500 1.500V9H9z" fill="#41a5ee" /><path d="M9 9h30.500v9H9z" fill="#2b7cd3" /><path d="M9 18h30.500v9H9z" fill="#185abd" /><path d="M9 27h30.500v7.500q0 1.500-1.500 1.500H10.500Q9 36 9 34.500z" fill="#103f91" />
            <rect x="0" y="8" width="20.500" height="20" rx="1.500" fill="#1551b5" />
            <text x="3" y="23.500" fontSize="15.500" fontWeight="700" fill="#fff" textLength="14.500" lengthAdjust="spacingAndGlyphs" fontFamily="Open Sans">W</text>
          </svg>
        </Task>
        <Task>
          <svg viewBox="0 0 40 38" className="h-[38px] w-10">
            <defs><linearGradient id="fold" x1="0" y1="0" x2="1" y2="1"><stop offset="0" stopColor="#faeeae" /><stop offset="1" stopColor="#e5c455" /></linearGradient></defs>
            <path d="M3 4l3-3h9l3 2h9l3 3h8v10H3z" fill="#efd98c" /><path d="M6 2h8v3H6zM15 5h10v3H15zM26 7.500h10v3H26z" fill="#fff" /><path d="M6 2h2v3H6z" fill="#3a8f3f" /><path d="M15 5h2v3h-2z" fill="#d2392c" /><path d="M26 7.500h2v3h-2z" fill="#2d7fc4" />
            <path d="M1 9q0-1.500 1.500-1.500H14l2.500 3h8l2 2.500h11q1.500 0 1.500 1.500V34q0 2-2 2H3q-2 0-2-2z" fill="url(#fold)" stroke="#d1b04d" strokeWidth=".6" />
            <path d="M5 37V24q0-2 2-2h26q2 0 2 2v13h-7v-7q0-2-2-2H14q-2 0-2 2v7z" fill="#8fd0ec" stroke="#5ba7cb" strokeWidth=".8" />
            <path d="M2 20l7-1-4-5 6 3 3-6 1 6 7-3-6 5 6 3-7-1-2 6-2-6-6 3 4-4z" fill="#fff" opacity=".35" />
          </svg>
        </Task>
        <Task>
          <svg viewBox="0 0 38 38" className="h-[38px] w-[38px]">
            <circle cx="19" cy="19" r="18.300" fill="#10131f" stroke="#817b76" strokeWidth=".8" />
            <path d="M19 6c-3 2-6 7-6 10.500 0 2.500 2 3.500 4 5V31h4v-9.500c2-1.500 4-2.500 4-5C25 13 22 8 19 6z" fill="#159382" />
            <path d="M8.500 9C3 16 4 27 14 32.500M29.500 9C35 16 34 27 24 32.500M10 14c-2 6 0 11 4 14v5M28 14c2 6 0 11-4 14v5" fill="none" stroke="#159382" strokeWidth="1.500" />
          </svg>
        </Task>
        <Task>
          <svg viewBox="0 0 40 40" className="-mt-px h-10 w-10">
            <defs><linearGradient id="wsg" x1="0" y1="0" x2=".7" y2="1"><stop offset="0" stopColor="#10d6d0" /><stop offset="1" stopColor="#1784de" /></linearGradient></defs>
            <path d="M0 4l15-4 9 2 9-2 3 10 3.500 16L34 31l-6 3-1.500 6-18-3L5 27z" fill="url(#wsg)" />
            <path d="M17 7l7-6 10-1 1 9z" fill="#f4ef4c" />
            <rect x="7.500" y="7" width="25" height="25" fill="#0b0b0b" />
            <text x="20" y="20" fontSize="13.500" fontWeight="700" fill="#fff" textAnchor="middle" textLength="21" lengthAdjust="spacingAndGlyphs" fontFamily="Open Sans">WS</text>
            <rect x="10" y="27" width="9" height="1.900" fill="#fff" />
          </svg>
        </Task>
        <div className="ml-auto flex items-center text-white">
          <svg viewBox="0 0 38 24" className="h-6 w-[38px]"><rect x=".7" y=".7" width="36.600" height="22.600" rx="1.500" fill="#fff" stroke="#5b4724" strokeWidth="1.300" /><path d="M4 5h30v14H4zM4 9.500h30M4 14.500h30M9 5v9M14 5v9M19 5v9M24 5v9M29 5v9M11 14.500V19M27 14.500V19" fill="none" stroke="#4b4232" strokeWidth="1.100" /></svg>
          <svg viewBox="0 0 11 8" className="ml-[17px] h-2 w-[11px]"><path d="M.7 5.500L5.500.8l4.800 4.700v1.600H.7z" fill="#fff" stroke="#6b5935" strokeWidth=".9" /></svg>
          <svg viewBox="0 0 20 20" className="ml-[18px] h-5 w-5"><path d="M1 .7h2V20H1z" fill="#fff" stroke="#6b5935" strokeWidth=".7" /><path d="M3 2c3-1.500 5 0 6.500 2s4 3 8 2v8c-4 1-6 0-8-1.500S5 10.500 3 11.500z" fill="#fff" stroke="#6b5935" strokeWidth=".8" /><circle cx="14" cy="14.500" r="5.200" fill="#d1232a" /><path d="M11.800 12.300l4.400 4.400M16.200 12.300l-4.400 4.400" stroke="#fff" strokeWidth="1.600" /></svg>
          <svg viewBox="0 0 20 21" className="ml-[10px] h-[21px] w-5"><path d="M10.500 3.500h2v-2h4v2h2v16.800h-8z" fill="#fff" stroke="#5b4724" strokeWidth="1.200" /><path d="M12 5.500h5v3.500h-5z" fill="#7d6025" /><path d="M2 0v5.500M5.500 0v5.500M.3 4.500h7v6.500h-7zM3.800 10V20.500" fill="none" stroke="#5b4724" strokeWidth="2.600" /><path d="M.8 5h6v5h-6zM1.300.5h1.400V5H1.300zM4.900.5h1.400V5H4.900zM3.100 10h1.400v10H3.100z" fill="#fff" /></svg>
          <svg viewBox="0 0 17 20" className="ml-[10px] h-5 w-[17px]" fill="#fff" stroke="#6b5935" strokeWidth=".7"><path d="M.5 16h2.700v3H.5zM3.900 13h2.700v6H3.900zM7.300 9.500H10V19H7.300zM10.700 5.500h2.600V19h-2.600zM14 1h2.700v18H14z" /></svg>
          <Fit w={28} className="ml-[20px] pt-[2px] text-[15.500px] leading-5">ENG</Fit>
          <div className="ml-[21px] mr-[20px] flex w-[76px] flex-col items-center pt-px text-[15px] leading-[22px]">
            <Fit w={34}>15:51</Fit>
            <Fit w={76}>10/06/2020</Fit>
          </div>
        </div>
      </div>
    </div>
  );
}

export default function App() {
  return (
    <div className="flex h-[1080px] w-[1920px] flex-col overflow-hidden bg-white">
      <TabStrip />
      <AddressBar />
      <MenuBar />
      <Toolbar />
      <div className="flex h-[772px]">
        <Sidebar />
        <div className="flex w-[14px] shrink-0 items-center justify-center border-r border-[#dfe1e5] bg-[#fbfbfb]">
          <div className="mt-[2px] h-[8px] w-[4px] border-x border-[#555]" />
        </div>
        <div className="flex w-[1242px] shrink-0 flex-col">
          <Canvas />
          <div className="flex h-[19px] items-start bg-[#f0f0f0]">
            <svg viewBox="0 0 6 10" className="ml-[5px] mt-[6px] h-[10px] w-[6px] shrink-0"><path d="M6 0v10L.5 5z" fill="#404040" /></svg>
            <div className="ml-[422px] mt-[2px] h-[17px] w-[504px] shrink-0 bg-[#c1c1c1]" />
          </div>
        </div>
        <FormatPanel />
      </div>
      <div className="h-[33px] border-t border-[#bdc0c0] bg-[#e4e4e4]" />
      <DownloadShelf />
      <Taskbar />
    </div>
  );
}
